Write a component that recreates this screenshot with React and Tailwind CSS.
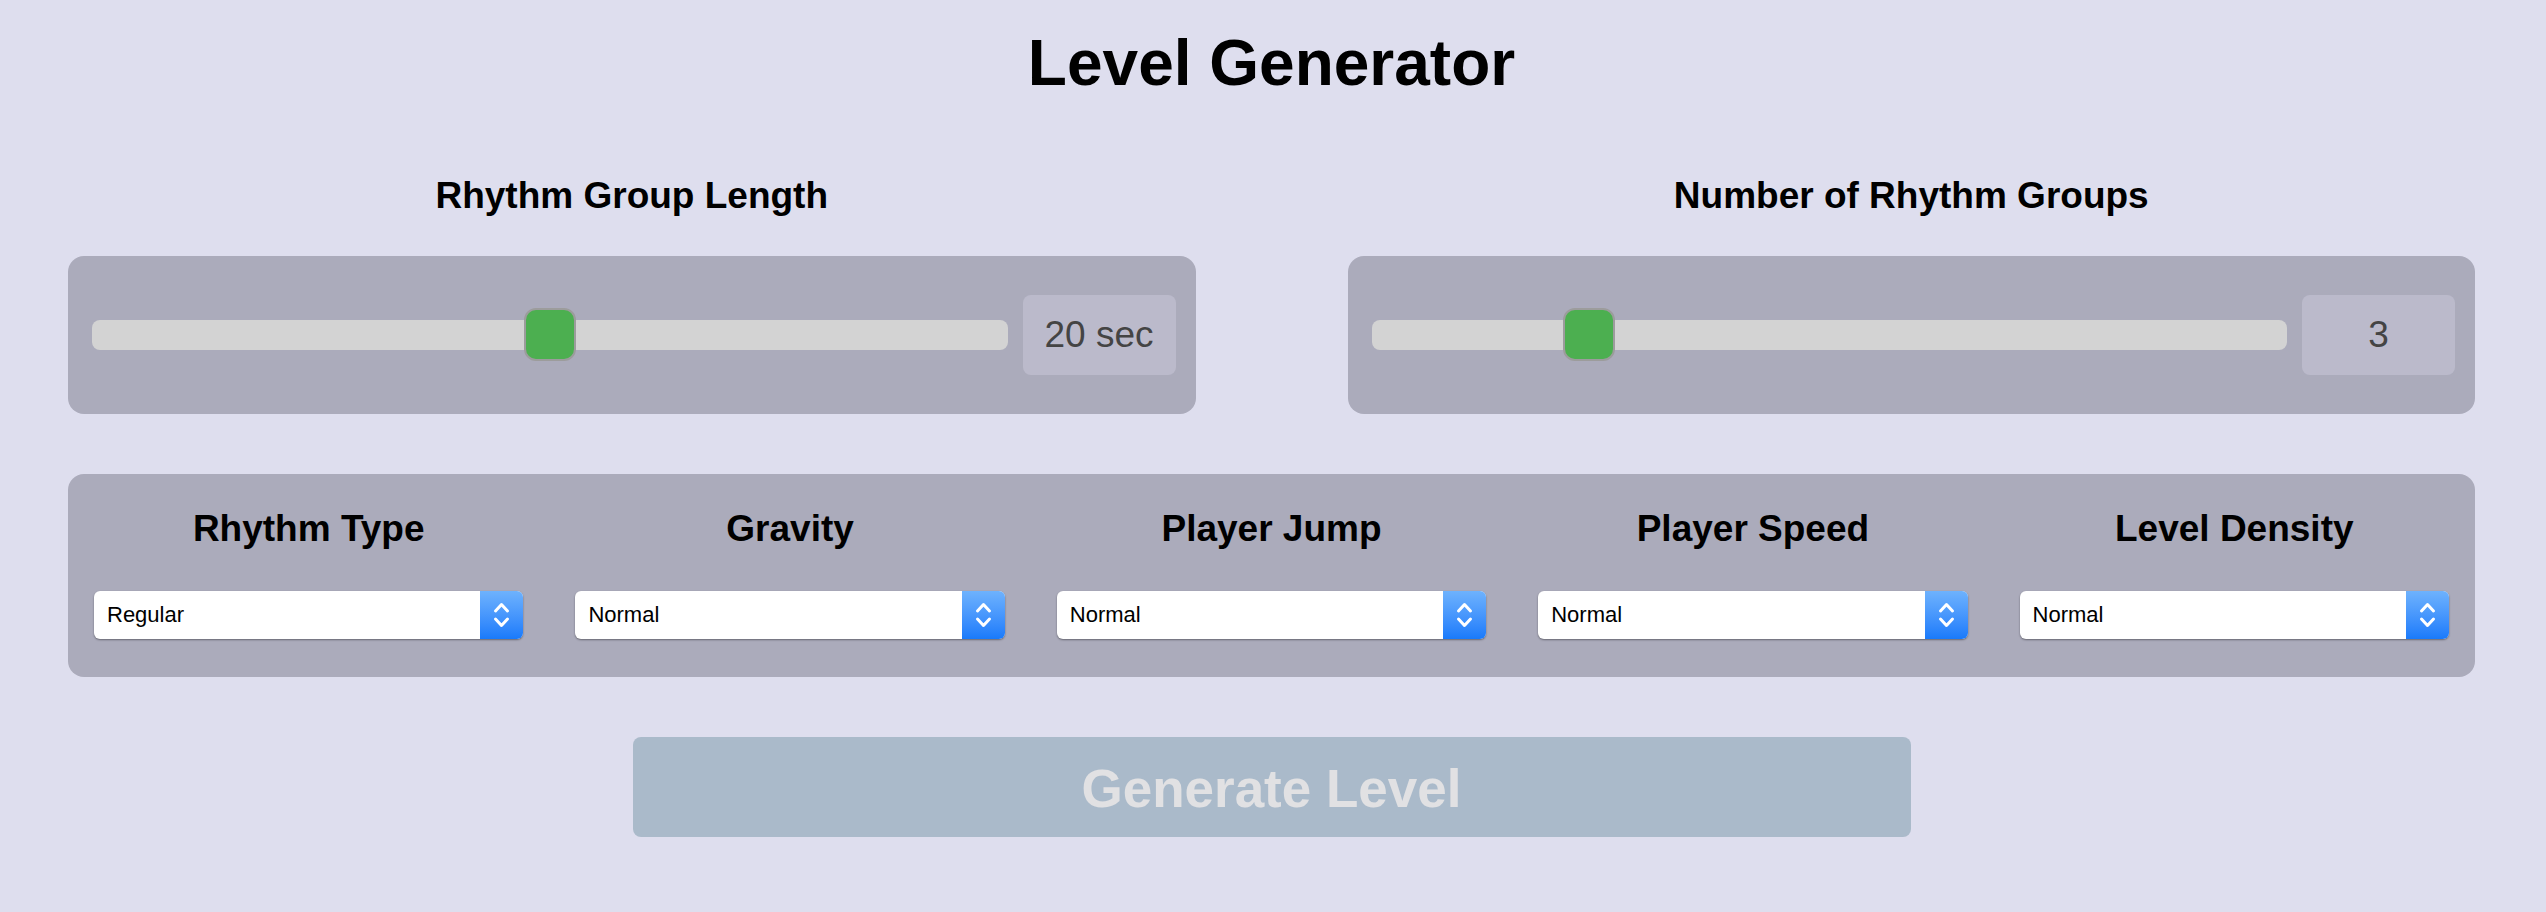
import React from 'react';

const sliders = [
  { id: 'length', title: 'Rhythm Group Length', value: 20, min: 10, max: 30, label: '20 sec' },
  { id: 'groups', title: 'Number of Rhythm Groups', value: 3, min: 1, max: 10, label: '3' }
];

const options = [
  { name: 'Rhythm Type', value: 'Regular' },
  { name: 'Gravity', value: 'Normal' },
  { name: 'Player Jump', value: 'Normal' },
  { name: 'Player Speed', value: 'Normal' },
  { name: 'Level Density', value: 'Normal' }
];

function Slider({ value, min, max, label }) {
  const pct = (value - min) / (max - min);
  return (
    <div className="mt-[42px] h-[158px] rounded-[16px] bg-[#ababbb] flex items-center pl-[24px] pr-[20px] gap-[15px]">
      <div className="relative flex-1 h-[30px] rounded-[8px] bg-[#d3d3d3]">
        <div
          className="absolute top-[-12px] w-[52px] h-[53px] rounded-[12px] bg-[#4caf50] border-2 border-[#9c9c9c]"
          style={{ left: `calc(${pct * 100}% - ${pct * 52}px)` }}
        />
      </div>
      <div className="w-[153px] h-[80px] rounded-[8px] bg-[#bbbacb] flex items-center justify-center text-[37px] text-[#444444]">
        {label}
      </div>
    </div>
  );
}

function Select({ value }) {
  return (
    <div className="mt-[44px] h-[48px] flex rounded-[6px] bg-white shadow-[0_1px_2px_rgba(0,0,0,0.4)]">
      <span className="flex-1 pl-[13px] text-[22px] leading-[48px] text-black">{value}</span>
      <div className="w-[43px] h-full rounded-r-[6px] bg-linear-to-b from-[#6eb2fd] to-[#187afb] flex items-center justify-center">
        <svg width="17" height="28" viewBox="0 0 17 28" fill="none" stroke="white" strokeWidth="3" strokeLinecap="round" strokeLinejoin="round">
          <path d="M2.5 10 L8.5 3.5 L14.5 10" />
          <path d="M2.5 18 L8.5 24.5 L14.5 18" />
        </svg>
      </div>
    </div>
  );
}

export default function App() {
  return (
    <div className="min-h-screen w-full bg-[#dedeee] font-['Liberation_Sans',Arial,sans-serif] pl-[68px] pr-[71px] pt-[31px] pb-[40px]">
      <h1 className="text-center text-[64px] leading-[64px] font-bold text-black">Level Generator</h1>

      <div className="mt-[82px] grid grid-cols-2 gap-x-[152px]">
        {sliders.map((s) => (
          <div key={s.id}>
            <h2 className="text-center text-[37px] leading-[37px] font-bold text-black">{s.title}</h2>
            <Slider value={s.value} min={s.min} max={s.max} label={s.label} />
          </div>
        ))}
      </div>

      <div className="mt-[60px] rounded-[16px] bg-[#ababbb] pt-[36px] pb-[38px] px-[26px] grid grid-cols-5 gap-x-[52px]">
        {options.map((o) => (
          <div key={o.name}>
            <h3 className="text-center text-[37px] leading-[37px] font-bold text-black">{o.name}</h3>
            <Select value={o.value} />
          </div>
        ))}
      </div>

      <button className="mt-[60px] mx-auto w-[1278px] h-[100px] rounded-[8px] bg-[#aabaca] text-[#e1e1e3] font-bold text-[53px] flex items-center justify-center pt-[4px]">
        Generate Level
      </button>
    </div>
  );
}
